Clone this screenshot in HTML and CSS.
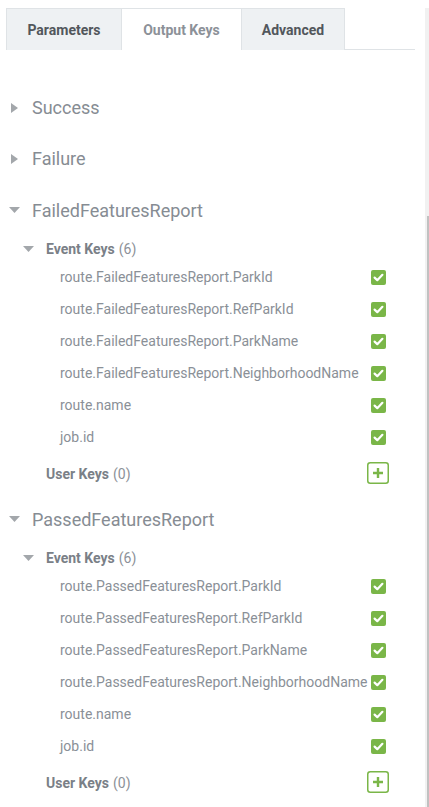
FILE: index.html
```html
<!DOCTYPE html>
<html>
<head>
<meta charset="utf-8">
<link rel="stylesheet" href="styles.css">
</head>
<body>
<div class="page">
  <div class="tabs">
    <div class="tab">Parameters</div>
    <div class="tab active">Output Keys</div>
    <div class="tab">Advanced</div>
  </div>

  <div class="content">
    <div class="group-head">
      <span class="caret"><svg width="7" height="10" viewBox="0 0 7 10"><path d="M0 0 L7 5 L0 10 Z" fill="#a3a7ab"/></svg></span>
      <span class="group-title">Success</span>
    </div>
    <div class="group-head">
      <span class="caret"><svg width="7" height="10" viewBox="0 0 7 10"><path d="M0 0 L7 5 L0 10 Z" fill="#a3a7ab"/></svg></span>
      <span class="group-title">Failure</span>
    </div>

    <div class="group-head open">
      <span class="caret"><svg width="11" height="6" viewBox="0 0 11 6"><path d="M0 0 L11 0 L5.5 6 Z" fill="#a3a7ab"/></svg></span>
      <span class="group-title">FailedFeaturesReport</span>
    </div>
    <div class="sub-head">
      <span class="caret"><svg width="11" height="6" viewBox="0 0 11 6"><path d="M0 0 L11 0 L5.5 6 Z" fill="#a3a7ab"/></svg></span>
      <span class="sub-title">Event Keys</span><span class="count">(6)</span>
    </div>
    <div class="key"><span>route.FailedFeaturesReport.ParkId</span><span class="check"><svg width="15" height="15" viewBox="0 0 15 15"><rect width="15" height="15" rx="2" fill="#7ab648"/><path d="M3.6 7.6 L6.3 10.2 L11.4 4.8" fill="none" stroke="#fff" stroke-width="2.2" stroke-linecap="round" stroke-linejoin="round"/></svg></span></div>
    <div class="key"><span>route.FailedFeaturesReport.RefParkId</span><span class="check"><svg width="15" height="15" viewBox="0 0 15 15"><rect width="15" height="15" rx="2" fill="#7ab648"/><path d="M3.6 7.6 L6.3 10.2 L11.4 4.8" fill="none" stroke="#fff" stroke-width="2.2" stroke-linecap="round" stroke-linejoin="round"/></svg></span></div>
    <div class="key"><span>route.FailedFeaturesReport.ParkName</span><span class="check"><svg width="15" height="15" viewBox="0 0 15 15"><rect width="15" height="15" rx="2" fill="#7ab648"/><path d="M3.6 7.6 L6.3 10.2 L11.4 4.8" fill="none" stroke="#fff" stroke-width="2.2" stroke-linecap="round" stroke-linejoin="round"/></svg></span></div>
    <div class="key"><span>route.FailedFeaturesReport.NeighborhoodName</span><span class="check"><svg width="15" height="15" viewBox="0 0 15 15"><rect width="15" height="15" rx="2" fill="#7ab648"/><path d="M3.6 7.6 L6.3 10.2 L11.4 4.8" fill="none" stroke="#fff" stroke-width="2.2" stroke-linecap="round" stroke-linejoin="round"/></svg></span></div>
    <div class="key"><span>route.name</span><span class="check"><svg width="15" height="15" viewBox="0 0 15 15"><rect width="15" height="15" rx="2" fill="#7ab648"/><path d="M3.6 7.6 L6.3 10.2 L11.4 4.8" fill="none" stroke="#fff" stroke-width="2.2" stroke-linecap="round" stroke-linejoin="round"/></svg></span></div>
    <div class="key"><span>job.id</span><span class="check"><svg width="15" height="15" viewBox="0 0 15 15"><rect width="15" height="15" rx="2" fill="#7ab648"/><path d="M3.6 7.6 L6.3 10.2 L11.4 4.8" fill="none" stroke="#fff" stroke-width="2.2" stroke-linecap="round" stroke-linejoin="round"/></svg></span></div>
    <div class="user-row">
      <span><span class="sub-title">User Keys</span><span class="count">(0)</span></span>
      <span class="add"><svg width="22" height="22" viewBox="0 0 22 22"><rect x="0.75" y="0.75" width="20.5" height="20.5" rx="2.5" fill="#fff" stroke="#7ab648" stroke-width="1.5"/><path d="M11 6 V16 M6 11 H16" stroke="#7ab648" stroke-width="2.4"/></svg></span>
    </div>

    <div class="group-head open">
      <span class="caret"><svg width="11" height="6" viewBox="0 0 11 6"><path d="M0 0 L11 0 L5.5 6 Z" fill="#a3a7ab"/></svg></span>
      <span class="group-title">PassedFeaturesReport</span>
    </div>
    <div class="sub-head">
      <span class="caret"><svg width="11" height="6" viewBox="0 0 11 6"><path d="M0 0 L11 0 L5.5 6 Z" fill="#a3a7ab"/></svg></span>
      <span class="sub-title">Event Keys</span><span class="count">(6)</span>
    </div>
    <div class="key"><span>route.PassedFeaturesReport.ParkId</span><span class="check"><svg width="15" height="15" viewBox="0 0 15 15"><rect width="15" height="15" rx="2" fill="#7ab648"/><path d="M3.6 7.6 L6.3 10.2 L11.4 4.8" fill="none" stroke="#fff" stroke-width="2.2" stroke-linecap="round" stroke-linejoin="round"/></svg></span></div>
    <div class="key"><span>route.PassedFeaturesReport.RefParkId</span><span class="check"><svg width="15" height="15" viewBox="0 0 15 15"><rect width="15" height="15" rx="2" fill="#7ab648"/><path d="M3.6 7.6 L6.3 10.2 L11.4 4.8" fill="none" stroke="#fff" stroke-width="2.2" stroke-linecap="round" stroke-linejoin="round"/></svg></span></div>
    <div class="key"><span>route.PassedFeaturesReport.ParkName</span><span class="check"><svg width="15" height="15" viewBox="0 0 15 15"><rect width="15" height="15" rx="2" fill="#7ab648"/><path d="M3.6 7.6 L6.3 10.2 L11.4 4.8" fill="none" stroke="#fff" stroke-width="2.2" stroke-linecap="round" stroke-linejoin="round"/></svg></span></div>
    <div class="key"><span>route.PassedFeaturesReport.NeighborhoodName</span><span class="check"><svg width="15" height="15" viewBox="0 0 15 15"><rect width="15" height="15" rx="2" fill="#7ab648"/><path d="M3.6 7.6 L6.3 10.2 L11.4 4.8" fill="none" stroke="#fff" stroke-width="2.2" stroke-linecap="round" stroke-linejoin="round"/></svg></span></div>
    <div class="key"><span>route.name</span><span class="check"><svg width="15" height="15" viewBox="0 0 15 15"><rect width="15" height="15" rx="2" fill="#7ab648"/><path d="M3.6 7.6 L6.3 10.2 L11.4 4.8" fill="none" stroke="#fff" stroke-width="2.2" stroke-linecap="round" stroke-linejoin="round"/></svg></span></div>
    <div class="key"><span>job.id</span><span class="check"><svg width="15" height="15" viewBox="0 0 15 15"><rect width="15" height="15" rx="2" fill="#7ab648"/><path d="M3.6 7.6 L6.3 10.2 L11.4 4.8" fill="none" stroke="#fff" stroke-width="2.2" stroke-linecap="round" stroke-linejoin="round"/></svg></span></div>
    <div class="user-row">
      <span><span class="sub-title">User Keys</span><span class="count">(0)</span></span>
      <span class="add"><svg width="22" height="22" viewBox="0 0 22 22"><rect x="0.75" y="0.75" width="20.5" height="20.5" rx="2.5" fill="#fff" stroke="#7ab648" stroke-width="1.5"/><path d="M11 6 V16 M6 11 H16" stroke="#7ab648" stroke-width="2.4"/></svg></span>
    </div>
  </div>

  <div class="scrollbar"><div class="thumb"></div></div>
</div>
</body>
</html>
```

FILE: styles.css
```css
html, body {
  margin: 0;
  padding: 0;
  background: #fff;
}
body {
  font-family: Roboto, "Liberation Sans", Arial, sans-serif;
  width: 429px;
  height: 807px;
  overflow: hidden;
}
.page {
  position: relative;
  width: 429px;
  height: 807px;
}
.tabs {
  display: flex;
  margin: 8px 14px 0 6px;
  border-bottom: 1px solid #dfe3e6;
  height: 41px;
}
.tab {
  box-sizing: border-box;
  height: 42px;
  padding: 0 10px;
  display: flex;
  align-items: center;
  justify-content: center;
  font-size: 14px;
  font-weight: 700;
  color: #52575c;
  background: #eef1f3;
  border: 1px solid #dfe3e6;
  border-bottom: none;
}
.tab:first-child { width: 116px; }
.tab.active {
  width: 119px;
  background: #fff;
  color: #8c9198;
  border-left: none;
  border-right: none;
}
.tab:last-child { width: 104px; }

.content {
  padding-top: 32px;
  padding-right: 40px;
}
.group-head {
  display: flex;
  align-items: center;
  height: 51px;
  padding-left: 11px;
}
.group-head .caret {
  width: 21px;
  display: flex;
  align-items: center;
}
.group-head.open {
  height: 52px;
  padding-left: 9px;
}
.group-head.open .caret { width: 23px; }
.group-title {
  font-size: 18px;
  color: #868c93;
}
.sub-head {
  display: flex;
  align-items: center;
  height: 25px;
  padding-left: 23px;
}
.sub-head .caret {
  width: 23px;
  display: flex;
  align-items: center;
}
.sub-title {
  font-size: 14px;
  font-weight: 700;
  color: #7a8087;
}
.count {
  font-size: 14px;
  color: #8c9198;
  margin-left: 4px;
}
.key {
  display: flex;
  align-items: center;
  justify-content: space-between;
  height: 32px;
  padding-left: 60px;
  font-size: 14px;
  color: #8a9097;
}
.key span:first-child {
  white-space: nowrap;
}
.check {
  display: flex;
  flex: none;
  margin-right: 3px;
}
.user-row {
  display: flex;
  align-items: center;
  justify-content: space-between;
  height: 40px;
  padding-left: 46px;
}
.add { display: flex; }

.scrollbar {
  position: absolute;
  top: 0;
  right: 0;
  width: 4px;
  height: 807px;
  background: #f1f1f1;
}
.thumb {
  position: absolute;
  top: 208px;
  right: 0;
  width: 2px;
  bottom: 0;
  background: #c1c1c1;
}
```
